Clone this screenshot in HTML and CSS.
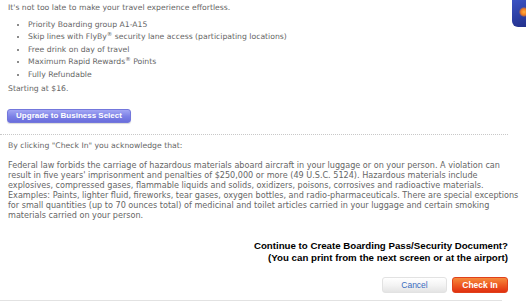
FILE: index.html
```html
<!DOCTYPE html>
<html>
<head>
<meta charset="utf-8">
<link rel="stylesheet" href="styles.css">
</head>
<body>
<div class="corner-badge"><span class="corner-dot"></span></div>
<div class="page">
  <p class="intro">It's not too late to make your travel experience effortless.</p>
  <ul class="perks">
    <li>Priority Boarding group A1-A15</li>
    <li>Skip lines with FlyBy<sup>®</sup> security lane access (participating locations)</li>
    <li>Free drink on day of travel</li>
    <li>Maximum Rapid Rewards<sup>®</sup> Points</li>
    <li>Fully Refundable</li>
  </ul>
  <p class="price">Starting at $16.</p>
  <button class="upgrade">Upgrade to Business Select</button>
  <div class="rule"></div>
  <p class="ack">By clicking "Check In" you acknowledge that:</p>
  <p class="law">Federal law forbids the carriage of hazardous materials aboard aircraft in your luggage or on your person. A violation can<br>result in five years' imprisonment and penalties of $250,000 or more (49 U.S.C. 5124). Hazardous materials include<br>explosives, compressed gases, flammable liquids and solids, oxidizers, poisons, corrosives and radioactive materials.<br>Examples: Paints, lighter fluid, fireworks, tear gases, oxygen bottles, and radio-pharmaceuticals. There are special exceptions<br>for small quantities (up to 70 ounces total) of medicinal and toilet articles carried in your luggage and certain smoking<br>materials carried on your person.</p>
  <div class="confirm">
    <div>Continue to Create Boarding Pass/Security Document?</div>
    <div>(You can print from the next screen or at the airport)</div>
  </div>
  <div class="actions">
    <button class="btn-cancel">Cancel</button>
    <button class="btn-checkin">Check In</button>
  </div>
  <div class="bottom-rule"></div>
</div>
</body>
</html>
```

FILE: styles.css
```css
html, body {
  margin: 0;
  padding: 0;
  background: #fff;
}

.page {
  padding: 0 18px 0 8px;
  font-family: "DejaVu Sans", Verdana, sans-serif;
  font-size: 7.7px;
  color: #666;
}

.intro {
  margin: 2px 0 0;
  line-height: 12px;
}

.perks {
  margin: 4.75px 0 0;
  padding-left: 20px;
  line-height: 12.5px;
}

.perks sup {
  font-size: 5.5px;
  line-height: 0;
  vertical-align: 3px;
}

.price {
  margin: 2px 0 0;
  line-height: 12px;
}

.upgrade {
  display: block;
  margin: 13.75px 0 0 -1px;
  width: 124px;
  height: 14px;
  padding: 0;
  border: 1px solid #7377dc;
  border-radius: 3px;
  background: linear-gradient(#a2a6f4, #7b80e6 55%, #6a6edc);
  box-shadow: 0 1px 1px rgba(0, 0, 0, 0.15);
  color: #fff;
  font-family: "Liberation Sans", Arial, sans-serif;
  font-weight: bold;
  font-size: 8px;
  line-height: 12px;
}

.rule {
  margin: 11px 0 0 -8px;
  border-top: 1px dotted #c8c8c8;
}

.ack {
  margin: 5px 0 0;
  line-height: 12px;
}

.law {
  margin: 8px 0 0;
  font-size: 8.1px;
  line-height: 10px;
  white-space: nowrap;
}

.confirm {
  margin-top: 20px;
  text-align: right;
  font-family: "Liberation Sans", Arial, sans-serif;
  font-weight: bold;
  font-size: 9.7px;
  line-height: 12px;
  color: #000;
}

.actions {
  margin-top: 13px;
  display: flex;
  justify-content: flex-end;
  gap: 5px;
}

.actions button {
  height: 16px;
  padding: 0;
  border-radius: 3px;
  font-family: "Liberation Sans", Arial, sans-serif;
  font-size: 8.5px;
  line-height: 14px;
}

.btn-cancel {
  width: 65px;
  border: 1px solid #e2e2e2;
  background: linear-gradient(#ffffff, #f4f4f4 50%, #e4e4e4);
  color: #3a6cc0;
}

.btn-checkin {
  width: 56px;
  border: 1px solid #e0401a;
  background: linear-gradient(#f58a3c, #ee5a22 50%, #e03010);
  color: #fff;
  font-weight: bold;
}

.bottom-rule {
  margin: 7px 0 0 -8px;
  width: 502px;
  border-top: 1px solid #e2e2e2;
}

.corner-badge {
  position: absolute;
  top: 0;
  right: 0;
  width: 14px;
  height: 27px;
  border-bottom-left-radius: 6px;
  background: linear-gradient(160deg, #3b53c4, #23318c);
  overflow: hidden;
}

.corner-dot {
  position: absolute;
  left: 7px;
  top: 7px;
  width: 10px;
  height: 10px;
  border-radius: 50%;
  background: radial-gradient(circle, #ffb040 0%, #f07a20 45%, rgba(240, 122, 32, 0) 75%);
}
```
